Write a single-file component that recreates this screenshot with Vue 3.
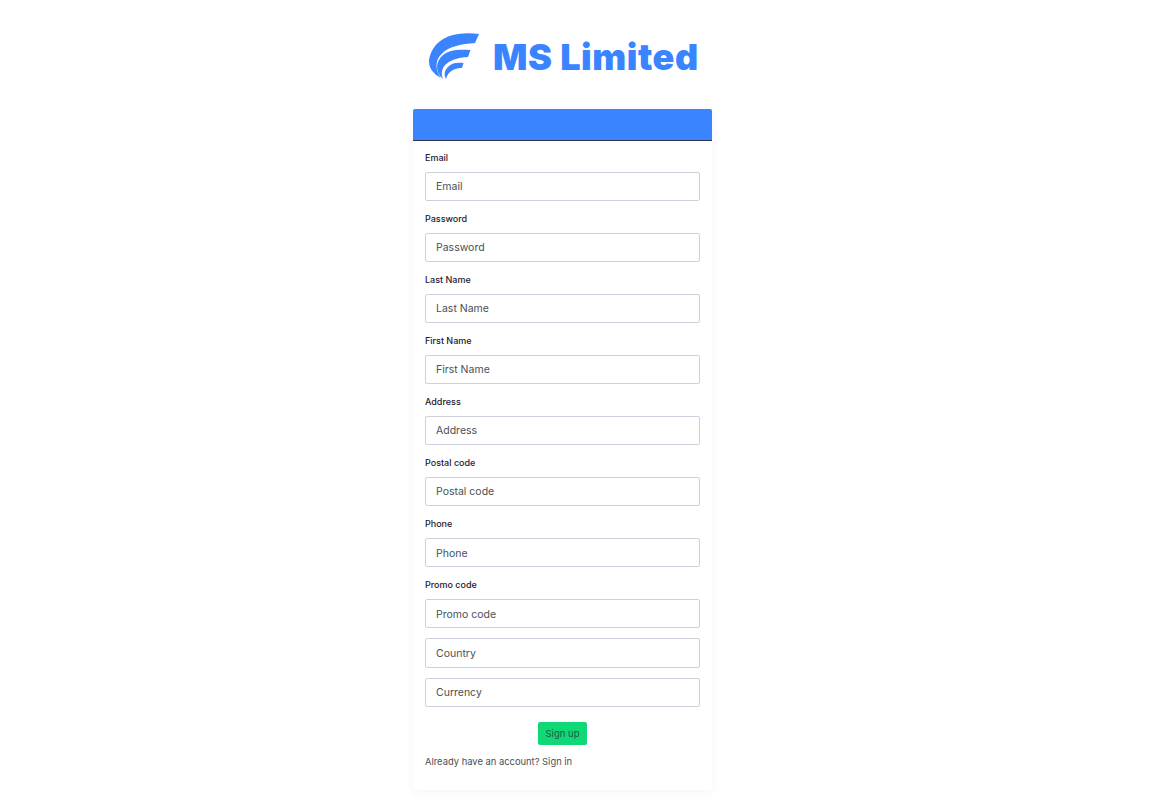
<script setup>
const labelled = ['Email', 'Password', 'Last Name', 'First Name', 'Address', 'Postal code', 'Phone', 'Promo code']
const plain = ['Country', 'Currency']
</script>

<template>
  <div class="page">
    <div class="logo">
      <svg class="mark" viewBox="0 0 52 48" width="52" height="48">
        <path d="M51 2 C34 0 14 2 5 17 C-2 29 0 39 13 46 C7 38 7 28 13.500 22 C21 14 34 12 47 11 Z" fill="#3a84ff" />
        <path d="M42.500 18 C30 17 19 18 13 25 C7 32 8 41 15 47 C12.500 41 14 35 19.500 31 C25 27 32 25.500 40 25 Z" fill="#3a84ff" />
        <path d="M35.500 31 C29 30 23 31 20 35 C16 39 16 43 18 47 C19 43 21 40 25 38 C28 36.500 31 36 34 36 Z" fill="#3a84ff" />
      </svg>
      <span class="brand">MS Limited</span>
    </div>

    <div class="card">
      <div class="card-header"></div>
      <form class="card-body" @submit.prevent>
        <div v-for="name in labelled" :key="name" class="group">
          <label class="label">{{ name }}</label>
          <div class="input">{{ name }}</div>
        </div>
        <div v-for="name in plain" :key="name" class="group">
          <div class="input">{{ name }}</div>
        </div>
        <div class="actions">
          <button class="submit" type="button">Sign up</button>
        </div>
        <p class="foot">Already have an account? <a class="link">Sign in</a></p>
      </form>
    </div>
  </div>
</template>

<style>
html, body { margin: 0; background: #fff; }
</style>

<style scoped>
.page {
  width: 1125px;
  height: 812px;
  overflow: hidden;
  display: flex;
  flex-direction: column;
  align-items: center;
  font-family: "Inter", "Open Sans", sans-serif;
  color: #2a2d3a;
}
.logo {
  width: 299px;
  height: 109px;
  box-sizing: border-box;
  padding: 32px 0 0 15px;
  display: flex;
  align-items: flex-start;
}
.mark { flex: none; }
.brand {
  margin: 0 0 0 13px;
  font-size: 36px;
  line-height: 50px;
  font-weight: 900;
  letter-spacing: 0.55px;
  color: #3a84ff;
  white-space: nowrap;
}
.card {
  width: 299px;
  height: 681px;
  border-radius: 2px;
  box-shadow: 0 2px 8px rgba(40, 50, 80, 0.05);
}
.card-header {
  height: 31px;
  background: #3a84ff;
  border-bottom: 1px solid #2f3648;
  border-radius: 2px 2px 0 0;
}
.card-body {
  padding: 8.9px 12px 0;
}
.group {
  margin-bottom: 10px;
}
.label {
  display: block;
  height: 13.88px;
  line-height: 15px;
  margin-bottom: 8px;
  font-size: 9px;
  font-weight: 500;
  color: #1d2030;
}
.input {
  box-sizing: border-box;
  height: 29.2px;
  line-height: 27.2px;
  padding: 0.4px 10px 0;
  border: 1px solid #cdd1dc;
  border-radius: 2px;
  font-size: 10.5px;
  color: #495057;
}
.actions {
  display: flex;
  justify-content: center;
  margin-top: 15.4px;
}
.submit {
  width: 49px;
  height: 23px;
  padding: 0;
  border: none;
  border-radius: 2px;
  background: #10d876;
  font-family: inherit;
  font-size: 9.5px;
  color: #1e5a42;
}
.foot {
  margin: 10px 0 0;
  font-size: 9.4px;
  line-height: 14px;
  color: #495057;
}
.link { color: #495057; }
</style>
